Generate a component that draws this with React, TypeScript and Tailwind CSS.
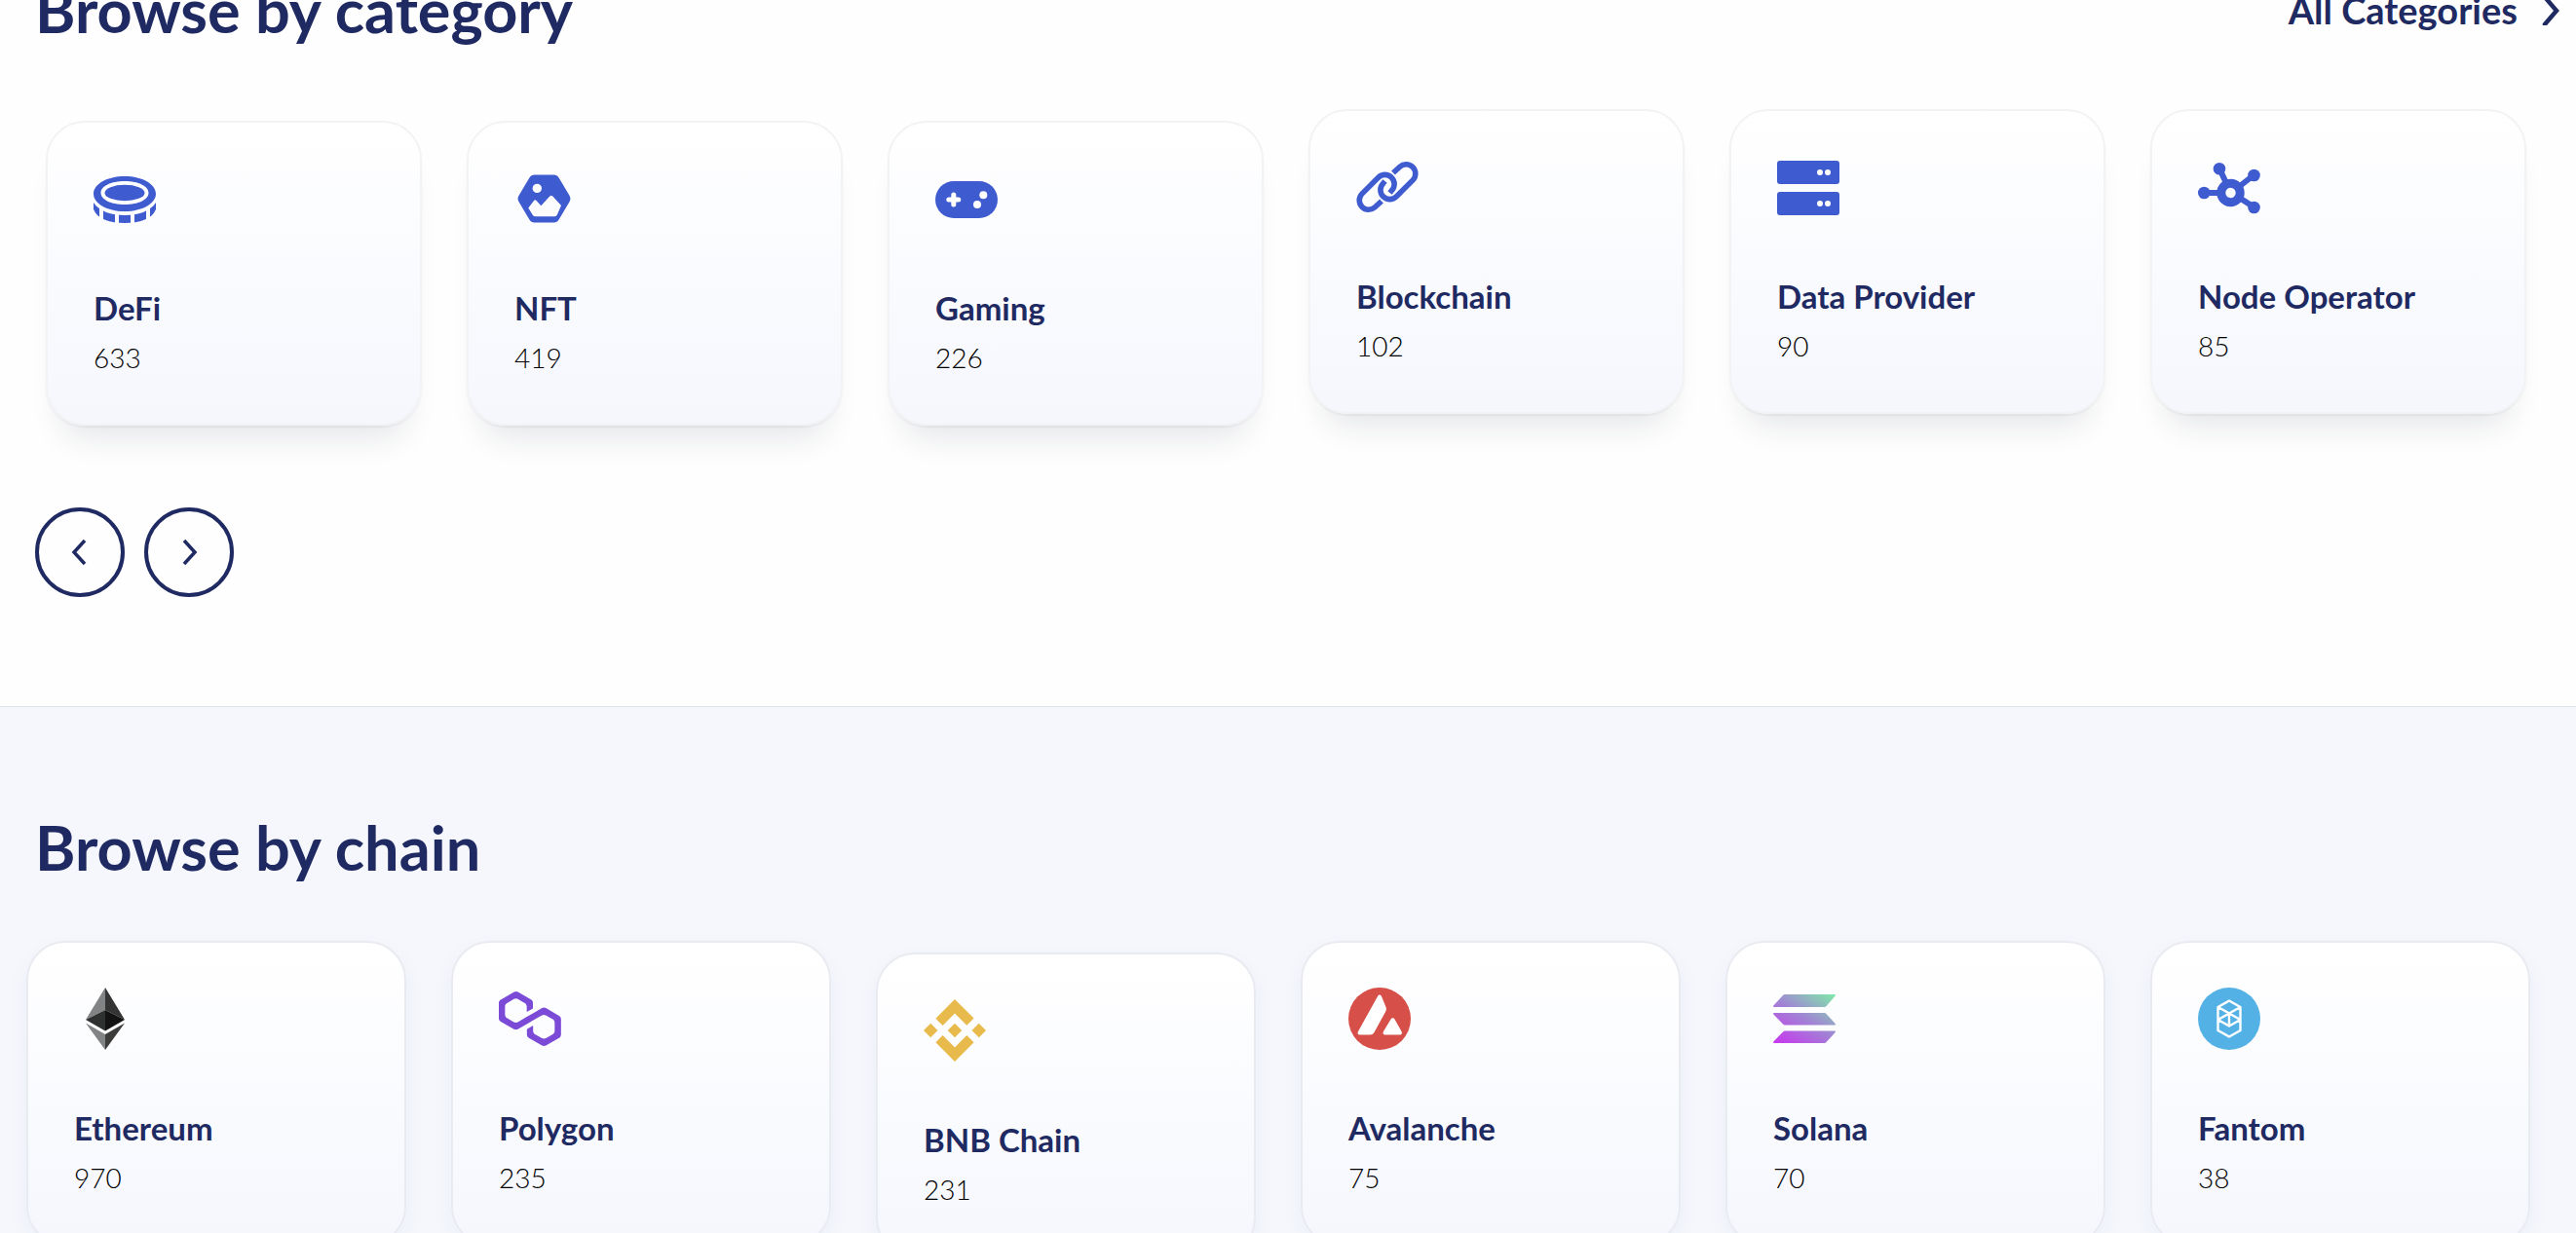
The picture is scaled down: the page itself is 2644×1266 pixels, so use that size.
import React, { ReactNode } from "react";
import clsx from "clsx";

interface BrowseItem {
    name: string;
    count: number;
    icon: ReactNode;
    lowered?: boolean;
}

interface BrowseCardProps {
    item: BrowseItem;
    elevated?: boolean;
}

const iconClass = "w-16 h-16 text-[#3f5bd0]";

const categories: BrowseItem[] = [
    {
        name: "DeFi",
        count: 633,
        lowered: true,
        icon: (
            <svg className={iconClass} fill="currentColor" viewBox="0 0 64 64">
                <clipPath id="coin-edge">
                    <path d="M0 30h6v34H0zM10 30h12v34H10zM26 30h12v34H26zM42 30h12v34H42zM58 30h6v34H58z" />
                </clipPath>
                <path
                    fillRule="evenodd"
                    d="M32 9C14 9 0 17 0 27s14 18 32 18 32-8 32-18S50 9 32 9zm0 5c14 0 24.500 5 24.500 12S46 38 32 38 7.500 33 7.500 26 18 14 32 14z"
                />
                <ellipse cx="32" cy="26" rx="20.500" ry="8.200" />
                <path clipPath="url(#coin-edge)" d="M0 36C6 45 18 49 32 49S58 45 64 36V43C60 53 47 57 32 57S4 53 0 43Z" />
            </svg>
        ),
    },
    {
        name: "NFT",
        count: 419,
        lowered: true,
        icon: (
            <svg className={iconClass} fill="currentColor" viewBox="0 0 64 64">
                <path
                    fillRule="evenodd"
                    d="M20.500 7.500h20c2.200 0 4 1.100 5.100 3l11 18.500c1.100 1.900 1.100 4 0 5.900l-11 18.500c-1.100 1.900-2.900 3-5.100 3h-20c-2.200 0-4-1.100-5.100-3l-11-18.500c-1.100-1.900-1.100-4 0-5.900l11-18.500c1.100-1.900 2.900-3 5.100-3zM23.300 16.700a4.700 4.700 0 1 0 0 9.400 4.700 4.700 0 0 0 0-9.400zM14.300 41.500l5.700-7.500q1.300-1.300 2.600 0l4.700 5.200 9-9.700q1.500-1.400 3 0l8.700 9.500-4 9.300q-.8 2-2.700 2h-20q-1.900 0-2.700-1.700z"
                />
            </svg>
        ),
    },
    {
        name: "Gaming",
        count: 226,
        lowered: true,
        icon: (
            <svg className={iconClass} fill="currentColor" viewBox="0 0 64 64">
                <rect y="14" width="64" height="38" rx="19" />
                <path d="M18.800 28v10M13.800 33h10" fill="none" stroke="#fff" strokeWidth="5" strokeLinecap="round" />
                <circle cx="49.300" cy="28.300" r="4" fill="#fff" />
                <circle cx="43" cy="38" r="4" fill="#fff" />
            </svg>
        ),
    },
    {
        name: "Blockchain",
        count: 102,
        icon: (
            <svg className={iconClass} fill="none" stroke="currentColor" strokeWidth="5.600" viewBox="0 0 64 64">
                <path d="M26 46.500l-6.800 6.300A9.600 9.600 0 0 1 5.600 39.300L22.700 22.200A9.600 9.600 0 0 1 36.300 35.800L34.500 38" />
                <path d="M38 17.500l6.800-6.300A9.600 9.600 0 0 1 58.400 24.700L41.300 41.800A9.600 9.600 0 0 1 27.700 28.200L29.500 26" />
            </svg>
        ),
    },
    {
        name: "Data Provider",
        count: 90,
        icon: (
            <svg className={iconClass} fill="currentColor" viewBox="0 0 64 64">
                <rect y="5" width="64" height="24" rx="3" />
                <rect y="37" width="64" height="24" rx="3" />
                <g fill="#fff">
                    <circle cx="44" cy="17" r="3" />
                    <circle cx="52" cy="17" r="3" />
                    <circle cx="44" cy="49" r="3" />
                    <circle cx="52" cy="49" r="3" />
                </g>
            </svg>
        ),
    },
    {
        name: "Node Operator",
        count: 85,
        icon: (
            <svg className={iconClass} fill="currentColor" viewBox="0 0 64 64">
                <path d="M6 38h17M22 13l7 15M57 20L43 31M58 53L44 44" stroke="currentColor" strokeWidth="6" />
                <circle cx="33.500" cy="38" r="9.700" fill="none" stroke="currentColor" strokeWidth="9" />
                <circle cx="22" cy="13.300" r="6.300" />
                <circle cx="57.500" cy="20" r="6.300" />
                <circle cx="6.300" cy="38" r="6.300" />
                <circle cx="57.500" cy="53" r="6.300" />
            </svg>
        ),
    },
];

const chains: BrowseItem[] = [
    {
        name: "Ethereum",
        count: 970,
        icon: (
            <svg className={iconClass} viewBox="0 0 64 64">
                <path fill="#828384" d="M32 0v23L12 33zM12 36.500L32 48v16z" />
                <path fill="#343434" d="M32 0v23l20 10z" />
                <path fill="#2f3030" d="M32 23v21.500L12 33z" />
                <path fill="#131313" d="M32 23v21.500L52 33z" />
                <path fill="#3c3c3b" d="M52 36.500L32 48v16z" />
            </svg>
        ),
    },
    {
        name: "Polygon",
        count: 235,
        icon: (
            <svg className={iconClass} viewBox="0 -2.450 38.400 38.400">
                <path
                    fill="#7b4bd8"
                    d="M29,10.2c-0.7-0.4-1.6-0.4-2.4,0L21,13.5l-3.8,2.1l-5.5,3.3c-0.7,0.4-1.6,0.4-2.4,0L5,16.3c-0.7-0.4-1.2-1.2-1.2-2.1v-5c0-0.8,0.4-1.6,1.2-2.1l4.3-2.5c0.7-0.4,1.6-0.4,2.4,0L16,7.2c0.7,0.4,1.2,1.2,1.2,2.1v3.3l3.8-2.2V7c0-0.8-0.4-1.6-1.2-2.1l-8-4.7c-0.7-0.4-1.6-0.4-2.4,0L1.2,5C0.4,5.4,0,6.2,0,7v9.4c0,0.8,0.4,1.6,1.2,2.1l8.1,4.7c0.7,0.4,1.6,0.4,2.4,0l5.5-3.2l3.8-2.2l5.5-3.2c0.7-0.4,1.6-0.4,2.4,0l4.3,2.5c0.7,0.4,1.2,1.2,1.2,2.1v5c0,0.8-0.4,1.6-1.2,2.1L29,28.8c-0.7,0.4-1.6,0.4-2.4,0l-4.3-2.5c-0.7-0.4-1.2-1.2-1.2-2.1V21l-3.8,2.2v3.3c0,0.8,0.4,1.6,1.2,2.1l8.1,4.7c0.7,0.4,1.6,0.4,2.4,0l8.1-4.7c0.7-0.4,1.2-1.2,1.2-2.1V17c0-0.8-0.4-1.6-1.2-2.1L29,10.2z"
                />
            </svg>
        ),
    },
    {
        name: "BNB Chain",
        count: 231,
        lowered: true,
        icon: (
            <svg className={iconClass} viewBox="0 0 24 24">
                <path
                    fill="#e8ba4b"
                    d="M16.624 13.9202l2.7175 2.7154-7.353 7.353-7.353-7.352 2.7175-2.7164 4.6355 4.6595 4.6356-4.6595zm4.6366-4.6366L24 12l-2.7154 2.7164L18.5682 12l2.6924-2.7164zm-9.272.001l2.7163 2.6914-2.7164 2.7174v-.001L9.2721 12l2.7164-2.7154zm-9.2722-.001L5.4088 12l-2.6914 2.6924L0 12l2.7164-2.7164zM11.9885.0115l7.353 7.329-2.7174 2.7154-4.6356-4.6356-4.6355 4.6595-2.7174-2.7154 7.353-7.353z"
                />
            </svg>
        ),
    },
    {
        name: "Avalanche",
        count: 75,
        icon: (
            <svg className={iconClass} viewBox="0 0 64 64">
                <circle cx="32" cy="32" r="32" fill="#d64f49" />
                <path
                    fill="#fff"
                    d="M34 9c-1-2-3-2-4 0L10 45c-1 2-.5 3.500 2 3.500h10c2 0 3.500-.8 4.500-2.500L38 25c1.200-2.300 1.200-4 0-6.300zM43.500 32.500c1-1.700 3-1.700 4 0L54.500 45c1 2 .4 3.500-2 3.500H38c-2.400 0-3-1.500-2-3.500z"
                />
            </svg>
        ),
    },
    {
        name: "Solana",
        count: 70,
        icon: (
            <svg className={iconClass} viewBox="0 0 64 64">
                <linearGradient id="solana-fill" gradientUnits="userSpaceOnUse" x1="56" y1="2" x2="16" y2="64">
                    <stop offset="0" stopColor="#7feaa8" />
                    <stop offset="0.500" stopColor="#a085d4" />
                    <stop offset="1" stopColor="#c63aee" />
                </linearGradient>
                <path
                    fill="url(#solana-fill)"
                    d="M12 7h51q1.500 0 .7 1.500L54.500 19q-.8 1-2 1H1q-1.500 0-.7-1.500L10 8q.8-1 2-1zM1 26h51.500q1.200 0 2 1l9.200 10q.8 1.500-.7 1.500H12q-1.200 0-2-1L.3 27.500Q-.5 26 1 26zM12 44.500h51q1.500 0 .7 1.500l-9.200 10q-.8 1-2 1H1q-1.500 0-.7-1.500L10 45.500q.8-1 2-1z"
                />
            </svg>
        ),
    },
    {
        name: "Fantom",
        count: 38,
        icon: (
            <svg className={iconClass} viewBox="0 0 64 64">
                <circle cx="32" cy="32" r="32" fill="#54b1e6" />
                <path
                    fill="none"
                    stroke="#fff"
                    strokeWidth="2.400"
                    strokeLinejoin="round"
                    d="M32 13.500l11.500 6.500v24L32 50.500 20.500 44V20zM20.500 20L32 26.500 43.500 20M32 26.500L20.500 33 32 39.500 43.500 33zM32 26.500v13"
                />
            </svg>
        ),
    },
];

function BrowseCard({ item, elevated = false }: BrowseCardProps) {
    return (
        <a
            href="#"
            className={clsx(
                "block rounded-[40px] border-2 bg-linear-to-b from-white to-[#f5f7fd] bg-origin-border px-[47px] pt-[46px] pb-[51px]",
                elevated
                    ? "border-[#f2f3f5] shadow-[0_28px_32px_-16px_rgba(30,40,60,0.11),0_2px_2px_rgba(30,40,60,0.05)]"
                    : "border-[#e9ebf1] shadow-[0_8px_24px_rgba(30,40,80,0.04)]",
                item.lowered && "mt-3"
            )}
        >
            {item.icon}
            <h3 className="mt-14 text-[33px] leading-[48px] font-bold text-[#1f2a62] whitespace-nowrap">{item.name}</h3>
            <p className="mt-2.5 text-[28px] leading-[34px] font-light text-black">{item.count}</p>
        </a>
    );
}

function App() {
    return (
        <main className="h-screen overflow-hidden bg-[#f5f7fd] font-[Lato,sans-serif] text-[#1f2a62]">
            {/* Category section, scrolled slightly past its top edge */}
            <section className="-mt-[22px] bg-[#fefefe] pb-28 border-b border-[#dfe2e8]">
                <div className="flex items-center justify-between pl-9 pr-4">
                    <h2 className="text-[63px] leading-[64px] font-bold">Browse by category</h2>
                    <a href="#" className="flex items-center gap-6 text-[38px] leading-[48px] font-bold">
                        All Categories
                        <svg className="w-5 h-8" fill="none" stroke="currentColor" strokeWidth="4.500" viewBox="0 0 20 32">
                            <path strokeLinecap="round" d="M4 3l12 14L4 31" />
                        </svg>
                    </a>
                </div>

                <div className="mt-[70px] grid grid-cols-6 items-start gap-[46px] pl-[47px] pr-[51px]">
                    {categories.map((item) => (
                        <BrowseCard key={item.name} item={item} elevated />
                    ))}
                </div>

                <div className="mt-[84px] flex gap-5 pl-9">
                    <button
                        type="button"
                        aria-label="Previous"
                        className="flex items-center justify-center w-[92px] h-[92px] rounded-full border-4 border-[#1f2a62]"
                    >
                        <svg className="w-5 h-7" fill="none" stroke="currentColor" strokeWidth="3.500" viewBox="0 0 20 28">
                            <path d="M15 2L4 14l11 12" />
                        </svg>
                    </button>
                    <button
                        type="button"
                        aria-label="Next"
                        className="flex items-center justify-center w-[92px] h-[92px] rounded-full border-4 border-[#1f2a62]"
                    >
                        <svg className="w-5 h-7" fill="none" stroke="currentColor" strokeWidth="3.500" viewBox="0 0 20 28">
                            <path d="M5 2l11 12L5 26" />
                        </svg>
                    </button>
                </div>
            </section>

            <section className="pt-28 pb-28">
                <h2 className="pl-9 text-[63px] leading-[64px] font-bold">Browse by chain</h2>
                <div className="mt-16 grid grid-cols-6 items-start gap-[46px] pl-[27px] pr-[47px]">
                    {chains.map((item) => (
                        <BrowseCard key={item.name} item={item} />
                    ))}
                </div>
            </section>
        </main>
    );
}

export default App;
